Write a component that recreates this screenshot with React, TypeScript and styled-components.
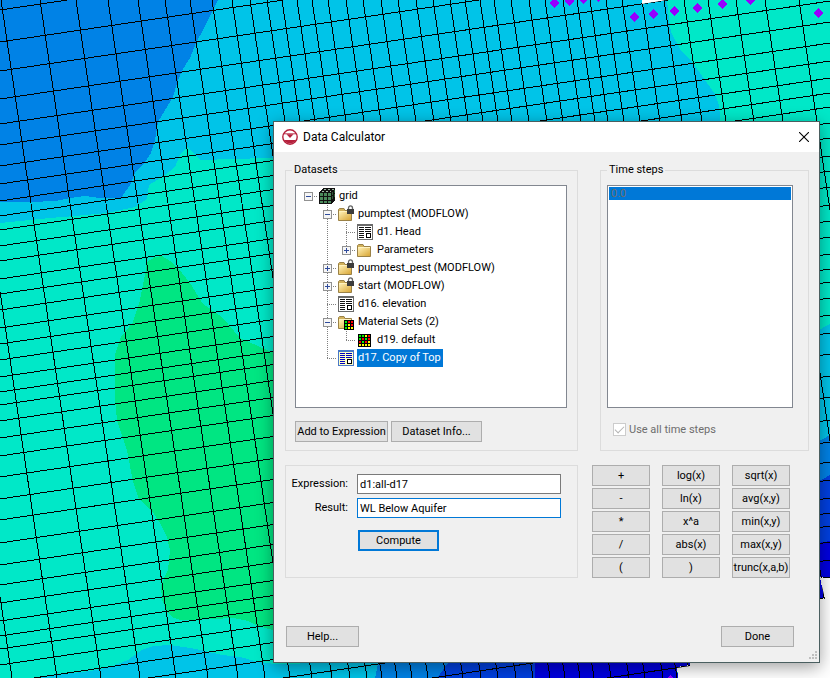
import React, { useState } from "react";
import styled, { createGlobalStyle, css } from "styled-components";

const GlobalStyle = createGlobalStyle`
  *, *::before, *::after { box-sizing: border-box; }
  body { margin: 0; background: #fff; }
`;

const uiFont = `Roboto, "Liberation Sans", Arial, sans-serif`;

/* ---------- layout ---------- */

const Stage = styled.main`
  position: relative;
  display: flex;
  align-items: flex-start;
  min-height: 100vh;
  padding: 121px 10px 15px 273px;
  overflow: hidden;
  font: 11px/13px ${uiFont};
  color: #000;
`;

const MapCanvas = styled.svg`
  position: absolute;
  inset: 0;
  width: 100%;
  height: 100%;
`;

const Dialog = styled.section`
  position: relative;
  flex: 1;
  min-width: 0;
  background: #f0f0f0;
  border: 1px solid #4a5f60;
  box-shadow: 0 4px 16px rgba(0, 0, 0, 0.38);
`;

const TitleBar = styled.header`
  display: flex;
  align-items: center;
  height: 30px;
  padding: 0 8px;
  gap: 5px;
  background: #fff;
`;

const Title = styled.h1`
  flex: 1;
  margin: 0;
  font: 400 12px/16px ${uiFont};
`;

const CloseButton = styled.button`
  display: flex;
  align-items: center;
  justify-content: center;
  width: 14px;
  height: 20px;
  padding: 0;
  border: 0;
  background: none;
`;

const Body = styled.form`
  display: flex;
  flex-direction: column;
  padding: 12px 10px 0 11px;
`;

const UpperPanels = styled.div`
  display: grid;
  grid-template-columns: 293fr 209fr;
  gap: 22px;
`;

const LowerPanels = styled.div`
  display: grid;
  grid-template-columns: 293fr 217fr;
  gap: 14px;
  margin-top: 14px;
`;

const Group = styled.fieldset<{ $inset: number }>`
  display: flex;
  flex-direction: column;
  min-width: 0;
  margin: 0;
  padding: 9px ${(p) => (p.$inset === 9 ? "10px" : "15px")} 8px ${(p) => p.$inset}px;
  border: 1px solid #dcdcdc;
`;

const Legend = styled.legend<{ $shift: number }>`
  margin-left: ${(p) => p.$shift}px;
  padding: 0 2px;
  line-height: 12px;
`;

const listFrame = css`
  height: 223px;
  margin: 0;
  list-style: none;
  background: #fff;
  border: 1px solid #828790;
`;

const Tree = styled.ul`
  ${listFrame}
  padding: 1px 3px;
`;

const TreeRow = styled.li`
  display: flex;
  align-items: center;
  height: 18px;
  white-space: nowrap;
`;

const Caption = styled.span<{ $selected?: boolean }>`
  margin-left: 3px;
  padding: 0 2px 0 1px;
  line-height: 18px;
  ${(p) => p.$selected && "background: #0078d7; color: #fff;"}
`;

const TimeList = styled.ul`
  ${listFrame}
  padding: 1px;
`;

const TimeStep = styled.li`
  padding: 0 2px;
  background: #0078d7;
  color: #6d6d6d;
`;

const ButtonRow = styled.div`
  display: flex;
  gap: 3px;
  margin-top: 13px;
`;

const PushButton = styled.button<{ $width?: number; $primary?: boolean }>`
  display: flex;
  align-items: center;
  justify-content: center;
  width: ${(p) => (p.$width ? `${p.$width}px` : "auto")};
  height: 21px;
  padding: 0;
  font: inherit;
  color: #000;
  white-space: nowrap;
  background: #e1e1e1;
  border: ${(p) => (p.$primary ? "2px solid #0078d7" : "1px solid #adadad")};
`;

const CheckLine = styled.label`
  display: flex;
  align-items: center;
  gap: 3px;
  margin: 15px 0 0 6px;
  color: #6d6d6d;
`;

const CheckBox = styled.input`
  appearance: none;
  display: grid;
  place-items: center;
  width: 13px;
  height: 13px;
  margin: 0;
  background: #fff;
  border: 1px solid #ccc;

  &:checked::before {
    content: "";
    width: 9px;
    height: 5px;
    margin-bottom: 3px;
    border: solid #b4b4b4;
    border-width: 0 0 1px 1px;
    transform: rotate(-45deg);
  }
`;

const FormPanel = styled.div`
  display: grid;
  grid-template-columns: 62px 1fr;
  grid-template-rows: 20px 20px 21px;
  row-gap: 4px;
  column-gap: 9px;
  align-content: start;
  height: 113px;
  padding: 8px 16px 0 0;
  border: 1px solid #dcdcdc;
`;

const FieldLabel = styled.label`
  text-align: right;
  line-height: 19px;
`;

const TextField = styled.input`
  min-width: 0;
  width: 100%;
  height: 20px;
  padding: 0 2px;
  font: inherit;
  color: #000;
  background: #fff;
  border: 1px solid #7a7a7a;
  border-radius: 0;
  outline: 0;

  &[name="result"] { border-color: #0078d7; }
`;

const ComputeCell = styled.div`
  grid-column: 2;
  padding: 8px 0 0 1px;
`;

const Keypad = styled.div`
  display: grid;
  grid-template-columns: repeat(3, 58px);
  gap: 2px 12px;
  align-content: start;
`;

const Footer = styled.footer`
  display: flex;
  justify-content: space-between;
  margin-top: 48px;
  padding: 0 15px 0 1px;
`;

const GripLine = styled.div`
  display: flex;
  justify-content: flex-end;
  height: 15px;
  padding: 4px 2px 0 0;
`;

/* ---------- map ---------- */

const rowLines = [
  10, 42, 71, 99, 124, 145, 166, 184, 201, 216, 230, 246, 261, 279, 294, 310, 328, 344, 360, 377,
  392, 405, 421, 438, 456, 477, 499, 520, 543, 565, 585, 603, 621, 636, 649, 665, 683, 700, 720, 742,
  768,
];

const columnLines = [
  -88, -43, 1, 40, 76, 108, 138, 165, 190, 212, 232, 250, 267, 282, 297, 312, 328, 346, 363, 381,
  398, 416, 433, 450, 465, 480, 494, 511, 529, 545, 563, 577, 590, 606, 622, 642, 664, 684, 708, 736,
  765, 799,
];

const wells = [
  [554, 3], [569, 1], [583, -1], [598, -3], [634, 17], [653, 14], [674, 11], [697, 8], [722, 4],
  [750, 0], [818, 13], [670, 680],
];

const ContourMap = () => (
  <MapCanvas viewBox="0 0 830 678" preserveAspectRatio="xMinYMin slice" aria-hidden="true">
    <g shapeRendering="crispEdges">
      <rect width="830" height="678" fill="#00c4e8" />
      <path fill="#0082e6" d="M0 0H218L212 12 203 30 196 43 190 58 183 69 178 80 173 97 165 110 158 122 155 140 151 153 145 162 135 173 130 185 121 198 100 198 85 196 70 198 55 201 30 202 0 202Z" />
      <path fill="#00e8c8" d="M0 223 50 218 75 216 107 213 135 207 147 199 149 185 165 175 175 167 180 155 187 147 200 160 300 157V664L274 664 255 661 240 657 222 655 205 651 190 648 170 645 153 646 142 650 128 660 110 667 90 671 57 675 33 678H0Z" />
      <path fill="#00e682" d="M147 262 155 257 162 256 170 261 178 268 190 283 203 304 222 317 240 338 258 346 274 353 300 360V636L273 630 258 626 248 621 233 618 213 619 180 620 172 617 167 611 162 600 161 585 168 570 170 550 167 537 160 523 152 511 139 499 133 482 127 450 117 420 115 400 115 355 121 337 133 322 140 300 145 275Z" />
      <path fill="#00e8c8" d="M667 0 669 20 671 32 680 49 692 62 705 80 715 94 719 105 721 130 800 340 830 324V0Z" />
      <path fill="#0082e6" d="M800 452 830 435V476L800 492Z" />
      <path fill="#0040e0" d="M800 492 830 475V541L800 546Z" />
      <path fill="#0000e0" d="M800 546 830 541V577H820L824 598H800Z" />
      <path fill="#fff" d="M830 577H820L824 598H810V655H690V665H677L678 678H830Z" />
      <path fill="#0082e6" d="M380 655H454L437 678H375Z" />
      <path fill="#0040e0" d="M454 655H535V678H437Z" />
      <path fill="#0000e0" d="M535 655H690V665L677 667 678 678H535Z" />
      <path fill="#fff" d="M642 0V4L667 0Z" />
    </g>
    <defs>
      <clipPath id="modelExtent">
        <path d="M0 0H642V4L667 0H830V578H820L825 599H800V655H690V666L677 668 678 678H0Z" />
      </clipPath>
    </defs>
    <g clipPath="url(#modelExtent)" stroke="#000" strokeWidth="1" shapeRendering="crispEdges">
      {rowLines.map((y) => (
        <line key={y} x1="0" y1={y} x2="830" y2={y - 123} />
      ))}
      {columnLines.map((x) => (
        <line key={x} x1={x} y1="0" x2={x + 100} y2="678" />
      ))}
    </g>
    <g fill="#9600ff" shapeRendering="crispEdges">
      {wells.map(([x, y]) => (
        <path key={x} d={`M${x} ${y - 5}l5 5-5 5-5-5z`} />
      ))}
    </g>
  </MapCanvas>
);

/* ---------- icons ---------- */

const AppLogo = () => (
  <svg width="16" height="16" viewBox="0 0 16 16" aria-hidden="true">
    <circle cx="8" cy="8" r="7.2" fill="#fff" stroke="#b5203c" strokeWidth="1.4" />
    <path d="M2 11H14A7 7 0 0 1 2 11Z" fill="#b5203c" />
    <path d="M4.500 5.200H11.500L8 9Z" fill="#b5203c" />
    <path d="M2 4.800H14" stroke="#b5203c" strokeWidth="0.900" />
  </svg>
);

const CloseIcon = () => (
  <svg width="10" height="10" viewBox="0 0 10 10" stroke="#000" aria-hidden="true">
    <path d="M0 0 10 10M10 0 0 10" strokeWidth="1.1" />
  </svg>
);

const GridIcon = () => (
  <svg width="16" height="16" viewBox="0 0 16 16" shapeRendering="crispEdges" aria-hidden="true">
    <path d="M0 4 4 0H16V12L12 16H0Z" fill="#111" />
    <path d="M5 1h2v1H5zM9 1h2v1H9zM13 1h2v1h-2zM3 3h2v1H3zM7 3h2v1H7zM11 3h1v1h-1z" fill="#9fb8a4" />
    <path d="M1 5h3v3H1zM5 5h3v3H5zM9 5h3v3H9zM1 9h3v3H1zM5 9h3v3H5zM9 9h3v3H9zM1 13h3v2H1zM5 13h3v2H5zM9 13h3v2H9z" fill="#4b8a5b" />
    <path d="M13 4h1v3h-1zM13 8h1v3h-1zM15 2h1v3h-1zM15 6h1v3h-1z" fill="#2b5c39" />
  </svg>
);

const folderBody = (
  <>
    <path d="M0.500 3.500 1.500 2.500H6L7 4.500H13.500V14.500H0.500Z" fill="#d2b25c" stroke="#9a8146" />
    <path d="M1 6H13V14H1Z" fill="url(#folderFace)" />
    <path d="M1 5.500H13" stroke="#fff2bf" />
  </>
);

const FolderIcon = ({ locked }: { locked?: boolean }) => (
  <svg width="16" height="16" viewBox="0 0 16 16" overflow="visible" aria-hidden="true">
    {folderBody}
    {locked && (
      <>
        <path d="M10.500 3.500V2A2 2.200 0 0 1 14.500 2V3.500" fill="none" stroke="#666" strokeWidth="1.300" />
        <rect x="9" y="3" width="7" height="5" fill="#3c3c3c" />
      </>
    )}
  </svg>
);

const swatches = [
  "#0e0", "#0e0", "#ff0", "#f00",
  "#0e0", "#f00", "#0e0", "#f00",
  "#f00", "#0e0", "#f00", "#ff0",
  "#ff0", "#ff0", "#ff0", "#ff0",
];

const MaterialIcon = () => (
  <svg width="16" height="16" viewBox="0 0 16 16" shapeRendering="crispEdges" aria-hidden="true">
    <rect x="1" y="2" width="13" height="13" fill="#000" />
    {swatches.map((fill, i) => (
      <rect key={i} x={2 + (i % 4) * 3} y={3 + Math.floor(i / 4) * 3} width="2" height="2" fill={fill} />
    ))}
  </svg>
);

const MaterialFolderIcon = () => (
  <svg width="16" height="16" viewBox="0 0 16 16" overflow="visible" aria-hidden="true">
    <g>{folderBody}</g>
    <g shapeRendering="crispEdges">
      <rect x="6" y="6" width="10" height="10" fill="#000" />
      {["#0e0", "#f00", "#f00", "#0e0", "#ff0", "#f00", "#0e0", "#ff0", "#ff0"].map((fill, i) => (
        <rect key={i} x={7 + (i % 3) * 3} y={7 + Math.floor(i / 3) * 3} width="2" height="2" fill={fill} />
      ))}
    </g>
  </svg>
);

const DatasetIcon = ({ active }: { active?: boolean }) => (
  <svg width="16" height="16" viewBox="0 0 16 16" shapeRendering="crispEdges" aria-hidden="true">
    <rect x="0" y="0" width="16" height="16" fill={active ? "#4a78c8" : "#6a6a6a"} />
    <rect x="1" y="2" width="14" height="13" fill={active ? "#ffffc8" : "#fff"} />
    <path
      d="M2 3.500H7M8 3.500H14M2 5.500H7M8 5.500H14M2 7.500H7M8 7.500H14M2 9.500H7M2 11.500H7M2 13.500H7"
      stroke={active ? "#0000c0" : "#111"}
    />
    <rect x="9.500" y="9.500" width="4" height="4" fill="#fff" stroke="#000" />
  </svg>
);

type Guide = "blank" | "line" | "tee" | "end" | "root";

const GuideCell = ({ kind, sign }: { kind: Guide; sign?: "+" | "-" }) => (
  <svg width="19" height="18" viewBox="0 0 19 18" shapeRendering="crispEdges" aria-hidden="true">
    <g stroke="#808080" strokeDasharray="1 1">
      {(kind === "line" || kind === "tee") && <path d="M9.500 0V18" />}
      {kind === "end" && <path d="M9.500 0V9" />}
      {kind !== "blank" && kind !== "line" && <path d="M9 9.500H19" />}
    </g>
    {sign && (
      <>
        <rect x="5.500" y="5.500" width="8" height="8" fill="#f6f6f6" stroke="#919191" />
        <path d={sign === "+" ? "M7 9.500H12M9.500 7V12" : "M7 9.500H12"} stroke="#2f4b9c" />
      </>
    )}
  </svg>
);

/* ---------- data ---------- */

type Node = { label: string; guides: Guide[]; sign?: "+" | "-"; icon: React.ReactNode; selected?: boolean };

const nodes: Node[] = [
  { label: "grid", guides: ["root"], sign: "-", icon: <GridIcon /> },
  { label: "pumptest (MODFLOW)", guides: ["blank", "tee"], sign: "-", icon: <FolderIcon locked /> },
  { label: "d1. Head", guides: ["blank", "line", "tee"], icon: <DatasetIcon /> },
  { label: "Parameters", guides: ["blank", "line", "end"], sign: "+", icon: <FolderIcon /> },
  { label: "pumptest_pest (MODFLOW)", guides: ["blank", "tee"], sign: "+", icon: <FolderIcon locked /> },
  { label: "start (MODFLOW)", guides: ["blank", "tee"], sign: "+", icon: <FolderIcon locked /> },
  { label: "d16. elevation", guides: ["blank", "tee"], icon: <DatasetIcon /> },
  { label: "Material Sets (2)", guides: ["blank", "tee"], sign: "-", icon: <MaterialFolderIcon /> },
  { label: "d19. default", guides: ["blank", "line", "end"], icon: <MaterialIcon /> },
  { label: "d17. Copy of Top", guides: ["blank", "end"], icon: <DatasetIcon active />, selected: true },
];

const IconSlot = styled.span`
  display: flex;
  margin-left: 1px;
`;

const keys = [
  "+", "log(x)", "sqrt(x)",
  "-", "ln(x)", "avg(x,y)",
  "*", "x^a", "min(x,y)",
  "/", "abs(x)", "max(x,y)",
  "(", ")", "trunc(x,a,b)",
];

export default function App() {
  const [expression, setExpression] = useState("d1:all-d17");
  const [result, setResult] = useState("WL Below Aquifer");

  return (
    <Stage>
      <GlobalStyle />
      <ContourMap />
      <svg width="0" height="0" display="block" aria-hidden="true">
        <linearGradient id="folderFace" x1="0" y1="0" x2="1" y2="1">
          <stop offset="0" stopColor="#fff0b4" />
          <stop offset="1" stopColor="#d8a636" />
        </linearGradient>
      </svg>
      <Dialog role="dialog" aria-labelledby="dialog-title">
        <TitleBar>
          <AppLogo />
          <Title id="dialog-title">Data Calculator</Title>
          <CloseButton type="button" aria-label="Close">
            <CloseIcon />
          </CloseButton>
        </TitleBar>
        <Body onSubmit={(e) => e.preventDefault()}>
          <UpperPanels>
            <Group $inset={9}>
              <Legend $shift={-3}>Datasets</Legend>
              <Tree role="tree" aria-label="Datasets">
                {nodes.map((node) => (
                  <TreeRow
                    key={node.label}
                    role="treeitem"
                    aria-level={node.guides.length}
                    aria-selected={!!node.selected}
                    aria-expanded={node.sign ? node.sign === "-" : undefined}
                  >
                    {node.guides.map((kind, i) => (
                      <GuideCell key={i} kind={kind} sign={i === node.guides.length - 1 ? node.sign : undefined} />
                    ))}
                    <IconSlot>{node.icon}</IconSlot>
                    <Caption $selected={node.selected}>{node.label}</Caption>
                  </TreeRow>
                ))}
              </Tree>
              <ButtonRow>
                <PushButton type="button" $width={93}>Add to Expression</PushButton>
                <PushButton type="button" $width={91}>Dataset Info...</PushButton>
              </ButtonRow>
            </Group>
            <Group $inset={6}>
              <Legend $shift={0}>Time steps</Legend>
              <TimeList role="listbox" aria-label="Time steps" aria-disabled="true">
                <TimeStep role="option" aria-selected="true">0.0</TimeStep>
              </TimeList>
              <CheckLine>
                <CheckBox type="checkbox" defaultChecked disabled />
                Use all time steps
              </CheckLine>
            </Group>
          </UpperPanels>
          <LowerPanels>
            <FormPanel>
              <FieldLabel htmlFor="expression">Expression:</FieldLabel>
              <TextField id="expression" name="expression" value={expression} onChange={(e) => setExpression(e.target.value)} />
              <FieldLabel htmlFor="result">Result:</FieldLabel>
              <TextField id="result" name="result" value={result} onChange={(e) => setResult(e.target.value)} />
              <ComputeCell>
                <PushButton type="submit" $width={81} $primary>Compute</PushButton>
              </ComputeCell>
            </FormPanel>
            <Keypad>
              {keys.map((key) => (
                <PushButton key={key} type="button" onClick={() => setExpression(expression + key)}>
                  {key}
                </PushButton>
              ))}
            </Keypad>
          </LowerPanels>
          <Footer>
            <PushButton type="button" $width={73}>Help...</PushButton>
            <PushButton type="button" $width={73}>Done</PushButton>
          </Footer>
        </Body>
        <GripLine>
          <svg width="8" height="8" viewBox="0 0 8 8" fill="#bfbfbf" shapeRendering="crispEdges" aria-hidden="true">
            <path d="M6 0h2v2H6zM3 3h2v2H3zM6 3h2v2H6zM0 6h2v2H0zM3 6h2v2H3zM6 6h2v2H6z" />
          </svg>
        </GripLine>
      </Dialog>
    </Stage>
  );
}
